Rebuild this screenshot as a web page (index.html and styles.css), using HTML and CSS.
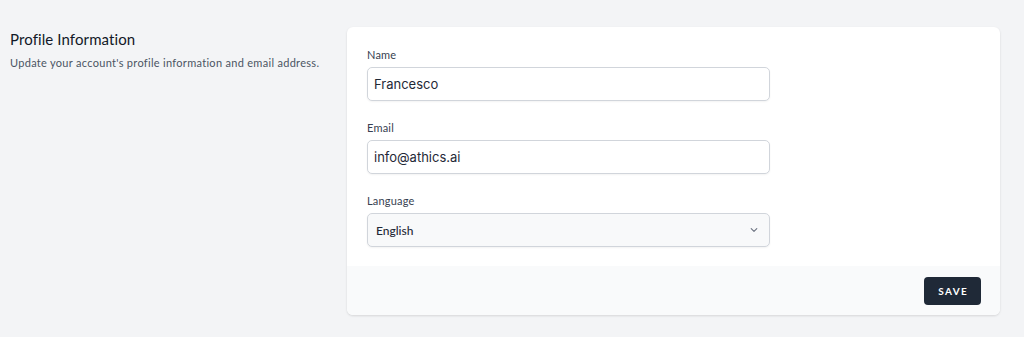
FILE: index.html
```html
<!DOCTYPE html>
<html lang="en">
<head>
<meta charset="utf-8">
<title>Profile Information</title>
<link rel="stylesheet" href="styles.css">
</head>
<body>
<div class="section">
  <div class="intro">
    <h3 class="title">Profile Information</h3>
    <p class="desc">Update your account's profile information and email address.</p>
  </div>
  <form class="card">
    <div class="fields">
      <div class="field">
        <label class="label" for="name">Name</label>
        <input class="input" id="name" type="text" value="Francesco">
      </div>
      <div class="field">
        <label class="label" for="email">Email</label>
        <input class="input" id="email" type="email" value="info@athics.ai">
      </div>
      <div class="field">
        <label class="label" for="lang">Language</label>
        <div class="select">
          <span class="select-value">English</span>
          <svg class="chev" width="14" height="14" viewBox="0 0 20 20" fill="none"><path d="M6 8l4 4 4-4" stroke="#6b7280" stroke-width="1.6" stroke-linecap="round" stroke-linejoin="round"/></svg>
        </div>
      </div>
    </div>
    <div class="footer">
      <button class="btn" type="button">Save</button>
    </div>
  </form>
</div>
</body>
</html>
```

FILE: styles.css
```css
* { box-sizing: border-box; }
html, body { margin: 0; padding: 0; }
body {
  background: #f3f4f6;
  font-family: "Lato", "Noto Sans", sans-serif;
  width: 1024px;
  height: 337px;
  overflow: hidden;
}
.section {
  display: grid;
  grid-template-columns: 316px 653px;
  column-gap: 21px;
  padding: 27px 24px 0 10px;
}
.intro { padding-top: 2px; }
.title {
  margin: 0;
  font-size: 15px;
  font-weight: 400;
  line-height: 20px;
  letter-spacing: 0.1px;
  color: #111827;
}
.desc {
  margin: 6px 0 0;
  font-size: 11px;
  line-height: 16px;
  letter-spacing: 0.3px;
  color: #4b5563;
}
.card {
  margin: 0;
  background: #fff;
  border-radius: 6px;
  box-shadow: 0 1px 3px rgba(0,0,0,0.08), 0 1px 2px rgba(0,0,0,0.05);
  overflow: hidden;
}
.fields {
  padding: 20px 20px 19px;
  display: flex;
  flex-direction: column;
  gap: 19px;
}
.field { display: flex; flex-direction: column; width: 403px; }
.label {
  font-size: 11px;
  line-height: 16px;
  letter-spacing: 0.2px;
  color: #374151;
  margin-bottom: 4px;
}
.input {
  height: 34px;
  width: 100%;
  border: 1px solid #d1d5db;
  border-radius: 5px;
  box-shadow: 0 1px 2px rgba(0,0,0,0.05);
  padding: 0 6px;
  font-family: "Inter", sans-serif;
  font-size: 13px;
  color: #1f2937;
  background: #fff;
  outline: none;
}
.select {
  height: 34px;
  border: 1px solid #d1d5db;
  border-radius: 5px;
  box-shadow: 0 1px 2px rgba(0,0,0,0.05);
  background: #f8f9fa;
  display: flex;
  align-items: center;
  justify-content: space-between;
  padding: 0 8px 0 8px;
}
.select-value {
  font-size: 12px;
  color: #1f2937;
  font-weight: 500;
}
.chev { display: block; }
.footer {
  background: #f9fafb;
  height: 49px;
  display: flex;
  justify-content: flex-end;
  align-items: center;
  padding: 0 19px;
}
.btn {
  width: 57px;
  height: 28px;
  background: #1f2937;
  color: #fff;
  border: none;
  border-radius: 4px;
  font-family: "Lato", sans-serif;
  font-size: 10px;
  font-weight: 700;
  letter-spacing: 0.13em;
  text-transform: uppercase;
  padding: 0 0 0 0.13em;
}
```
